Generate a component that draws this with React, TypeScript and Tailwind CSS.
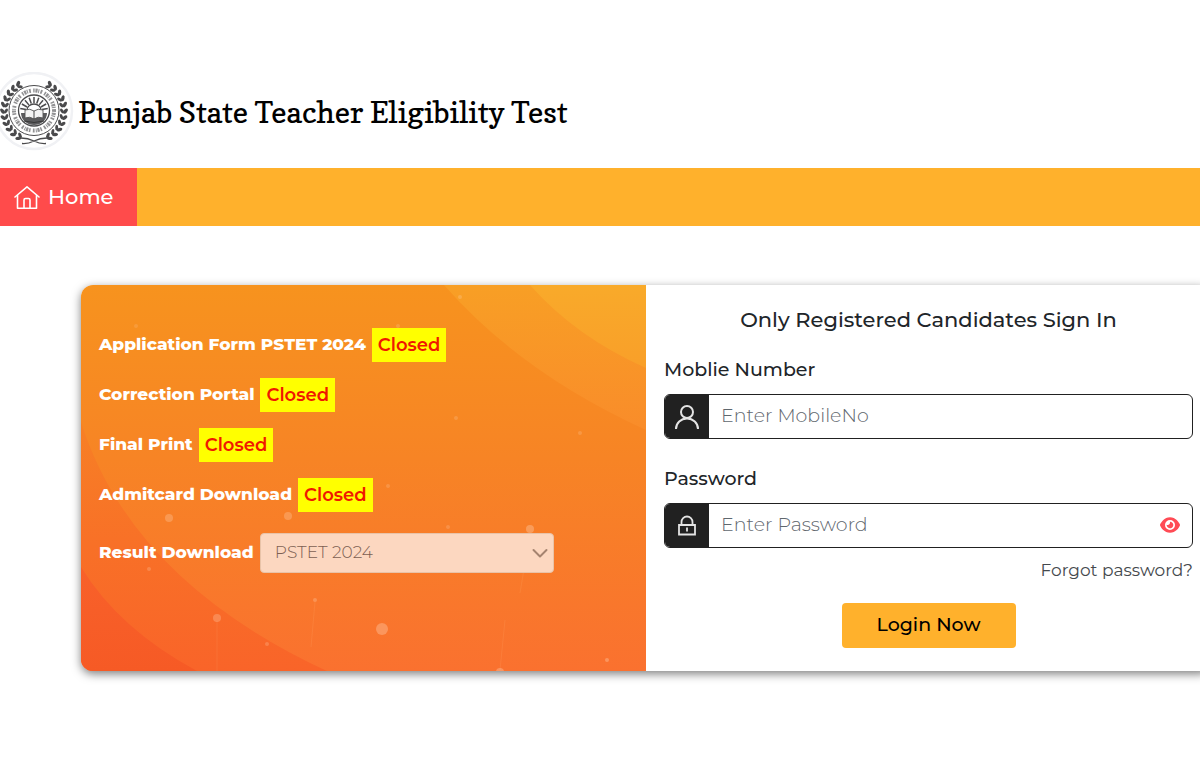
import React, { useState } from 'react';
import { FaEye, FaEyeSlash } from 'react-icons/fa6';

const notices = [
  'Application Form PSTET 2024',
  'Correction Portal',
  'Final Print',
  'Admitcard Download',
];

// x, y, radius, opacity
const sparks = [
  [88, 233, 4, 0.2],
  [207, 231, 4, 0.2],
  [68, 284, 2, 0.15],
  [136, 333, 4, 0.2],
  [234, 315, 2, 0.2],
  [186, 359, 2, 0.15],
  [301, 344, 6, 0.25],
  [449, 244, 4, 0.25],
  [419, 387, 4, 0.25],
  [526, 375, 2, 0.25],
  [307, 201, 2, 0.12],
  [367, 242, 2, 0.12],
  [499, 148, 2, 0.12],
  [375, 133, 2, 0.12],
  [379, 12, 2, 0.15],
  [317, 41, 2, 0.12],
  [55, 41, 2, 0.08],
];

const leaves = Array.from({ length: 11 }, (_, i) => 32 + i * 12);

function Emblem() {
  return (
    <svg viewBox="0 0 80 80" className="-ml-1.5 size-20 shrink-0" role="img" aria-label="Punjab School Education Board">
      <circle cx="40" cy="39" r="38" fill="#fff" stroke="#f0f1f4" strokeWidth="2.5" />
      <g fill="#4a4a4c">
        {[1, -1].map((side) => (
          <g key={side} transform={side === 1 ? undefined : 'translate(80 0) scale(-1 1)'}>
            {leaves.map((deg) => (
              <g key={deg} transform={`rotate(${deg} 40 39)`}>
                <ellipse cx="39" cy="7.500" rx="3" ry="1.7" transform="rotate(36 39 7.500)" />
                <ellipse cx="39" cy="11" rx="2.8" ry="1.5" transform="rotate(-36 39 11)" />
              </g>
            ))}
          </g>
        ))}
      </g>
      <g fill="none" stroke="#4a4a4c">
        <path d="M27 66q7 0 13 3t12 2.500M53 66q-7 0-13 3t-12 2.500" strokeWidth="1.300" />
        <circle cx="40" cy="38.500" r="25" strokeWidth="1" fill="#fff" />
        <circle cx="40" cy="38.500" r="20" strokeWidth="4" strokeDasharray="1.500 .8 2.200 .7 1 1.200 1.800 2.400" opacity="0.6" />
        <circle cx="40" cy="38.500" r="15.500" strokeWidth="1.300" />
        {[-80, -60, -40, -20, 0, 20, 40, 60, 80].map((deg) => (
          <path key={deg} d="M40 25v6" strokeWidth="1.500" transform={`rotate(${deg} 40 39)`} />
        ))}
        <path d="M33 38a7 6 0 0 1 14 0" strokeWidth="1.300" fill="#fff" />
      </g>
      <path d="M27 41h26a13 12 0 0 1-26 0z" fill="#5b5b5d" />
      <path d="M31 38q5-2 9 1q4-3 9-1v8q-5-2-9 1q-4-3-9-1z" fill="#f4f4f4" stroke="#555" strokeWidth="0.900" />
      <path d="M40 39v8M30 49q10 3 20 0" stroke="#333" strokeWidth="0.900" fill="none" />
    </svg>
  );
}

function PanelBackdrop() {
  return (
    <svg
      viewBox="0 0 565 386"
      preserveAspectRatio="none"
      className="absolute inset-0 -z-10 h-full w-full"
      aria-hidden="true"
    >
      <defs>
        <linearGradient id="panel-base" x1="0" y1="0" x2="0" y2="1">
          <stop offset="0" stopColor="#f7931e" />
          <stop offset="0.45" stopColor="#f78425" />
          <stop offset="1" stopColor="#fa712f" />
        </linearGradient>
        <linearGradient id="panel-low" x1="0" y1="0" x2="0" y2="1">
          <stop offset="0" stopColor="#f78025" />
          <stop offset="0.5" stopColor="#f87027" />
          <stop offset="1" stopColor="#f96429" />
        </linearGradient>
        <linearGradient id="panel-corner" x1="0" y1="0" x2="0" y2="1">
          <stop offset="0" stopColor="#f8612a" />
          <stop offset="1" stopColor="#f65a25" />
        </linearGradient>
        <linearGradient id="panel-mid" x1="0" y1="0" x2="0" y2="1">
          <stop offset="0" stopColor="#f89f25" />
          <stop offset="1" stopColor="#f98c2a" />
        </linearGradient>
        <linearGradient id="panel-top" x1="0" y1="0" x2="0" y2="1">
          <stop offset="0" stopColor="#f9aa2a" />
          <stop offset="1" stopColor="#f99f29" />
        </linearGradient>
      </defs>
      <rect width="565" height="386" fill="url(#panel-base)" />
      <path d="M363 0Q440 88 565 145V0z" fill="url(#panel-mid)" />
      <path d="M449 0Q495 52 565 83V0z" fill="url(#panel-top)" />
      <path d="M0 137Q50 295 246 386H0z" fill="url(#panel-low)" />
      <path d="M0 282Q38 344 116 386H0z" fill="url(#panel-corner)" />
      <g stroke="#ffb27a" strokeOpacity="0.15">
        <path d="M136 336v50M234 317l-4 45M449 248l-10 60M424 335l-5 50" />
      </g>
      {sparks.map(([x, y, r, o]) => (
        <circle key={`${x}-${y}`} cx={x} cy={y} r={r} fill="#ffdcc0" fillOpacity={o + 0.08} />
      ))}
    </svg>
  );
}

export default function App() {
  const [mobile, setMobile] = useState('');
  const [password, setPassword] = useState('');
  const [showPassword, setShowPassword] = useState(false);

  const handleSubmit = (e: React.FormEvent) => {
    e.preventDefault();
  };

  return (
    <div className="min-h-screen overflow-x-hidden bg-white font-['Montserrat',Inter,sans-serif] text-[#212529]">
      <header className="flex items-center gap-1 pt-18 pb-4">
        <Emblem />
        <h1 className="text-[30px] leading-9 whitespace-nowrap text-black font-['Copse','DejaVu_Serif_Condensed','DejaVu_Serif',serif]">
          Punjab State Teacher Eligibility Test
        </h1>
      </header>

      <nav className="flex bg-[#ffb12c]">
        <a href="#home" className="flex h-[58px] w-[137px] items-center gap-2 bg-[#ff4b4b] pl-3.5 text-[21px] font-medium text-white">
          <svg viewBox="0 0 26 24" className="h-6 w-[26px]" fill="none" stroke="currentColor" strokeWidth="1.6" strokeLinecap="round" strokeLinejoin="round" aria-hidden="true">
            <path d="M1 12L13 1.800l12 10.200" />
            <path d="M3.500 10.500V23.200h19V10.500" />
            <path d="M10 23v-8q0-1.500 1.500-1.500h3q1.500 0 1.500 1.500v8" />
          </svg>
          <span>Home</span>
        </a>
      </nav>

      <main className="mt-[59px] -mr-[11px] mb-24 ml-[81px] grid grid-cols-2 rounded-xl bg-white shadow-[0_3px_10px_rgba(0,0,0,0.5)]">
        <section className="relative isolate overflow-hidden rounded-l-xl px-[18px] pt-[43px]">
          <PanelBackdrop />
          <ul className="flex flex-col gap-4">
            {notices.map((notice) => (
              <li key={notice} className="flex items-center gap-1.5 text-[17px] font-extrabold whitespace-nowrap text-white">
                {notice}
                <span className="bg-[#ffff00] px-1.5 py-[3px] text-lg font-semibold text-[#f01800]">Closed</span>
              </li>
            ))}
          </ul>
          <div className="mt-[21px] flex items-center gap-1.5">
            <label htmlFor="result" className="text-[17px] font-extrabold whitespace-nowrap text-white">
              Result Download
            </label>
            <div className="relative">
              <select
                id="result"
                defaultValue="2024"
                className="h-10 w-[294px] appearance-none rounded border border-[#e9c3a8] bg-[#fcd7c0] px-3.5 text-[17px] font-light text-[#7d6052]"
              >
                <option value="2024">PSTET 2024</option>
              </select>
              <svg viewBox="0 0 16 16" className="pointer-events-none absolute top-3 right-1.5 size-4" fill="none" stroke="#a5836f" strokeWidth="2" strokeLinecap="round" strokeLinejoin="round" aria-hidden="true">
                <path d="M1.500 5L8 11.500L14.500 5" />
              </svg>
            </div>
          </div>
        </section>

        <form onSubmit={handleSubmit} className="flex flex-col px-[18px] pt-[21px] pb-[23px]">
          <h2 className="text-center text-[21px] leading-7 font-medium">Only Registered Candidates Sign In</h2>

          <label htmlFor="mobile" className="mt-6 text-[19px] leading-6 font-medium">
            Moblie Number
          </label>
          <div className="mt-3 flex h-[45px] overflow-hidden rounded-md border border-[#212121]">
            <span className="flex w-11 shrink-0 items-center justify-center bg-[#212121]">
              <svg viewBox="0 0 24 24" className="size-6" fill="none" stroke="#e4e4e4" strokeWidth="2" aria-hidden="true">
                <circle cx="12" cy="7" r="6" />
                <path d="M1 24a11 10.500 0 0 1 22 0" />
              </svg>
            </span>
            <input
              id="mobile"
              type="tel"
              placeholder="Enter MobileNo"
              value={mobile}
              onChange={(e) => setMobile(e.target.value)}
              className="min-w-0 flex-1 px-3 text-[19px] font-light outline-none placeholder:text-[#5f676e]"
            />
          </div>

          <label htmlFor="password" className="mt-7 text-[19px] leading-6 font-medium">
            Password
          </label>
          <div className="mt-3 flex h-[45px] overflow-hidden rounded-md border border-[#212121]">
            <span className="flex w-11 shrink-0 items-center justify-center bg-[#212121]">
              <svg viewBox="0 0 20 22" className="h-[22px] w-5" fill="none" stroke="#e4e4e4" strokeWidth="1.8" aria-hidden="true">
                <path d="M2 10h16v9.500H2z" />
                <path d="M4.500 10V7a5.500 5.500 0 0 1 11 0v3M10 12.500v4" />
              </svg>
            </span>
            <input
              id="password"
              type={showPassword ? 'text' : 'password'}
              placeholder="Enter Password"
              value={password}
              onChange={(e) => setPassword(e.target.value)}
              className="min-w-0 flex-1 px-3 text-[19px] font-light outline-none placeholder:text-[#5f676e]"
            />
            <button
              type="button"
              aria-label="Show password"
              onClick={() => setShowPassword(!showPassword)}
              className="px-3 pb-0.5 text-xl text-[#ff4b55]"
            >
              {showPassword ? <FaEyeSlash /> : <FaEye />}
            </button>
          </div>

          <a href="#forgot" className="mt-2.5 self-end text-[17px] leading-6 text-[#45494d]">
            Forgot password?
          </a>
          <button
            type="submit"
            className="mt-[21px] h-[45px] w-[174px] self-center rounded bg-[#ffb12c] text-[19px] font-medium text-black"
          >
            Login Now
          </button>
        </form>
      </main>
    </div>
  );
}
